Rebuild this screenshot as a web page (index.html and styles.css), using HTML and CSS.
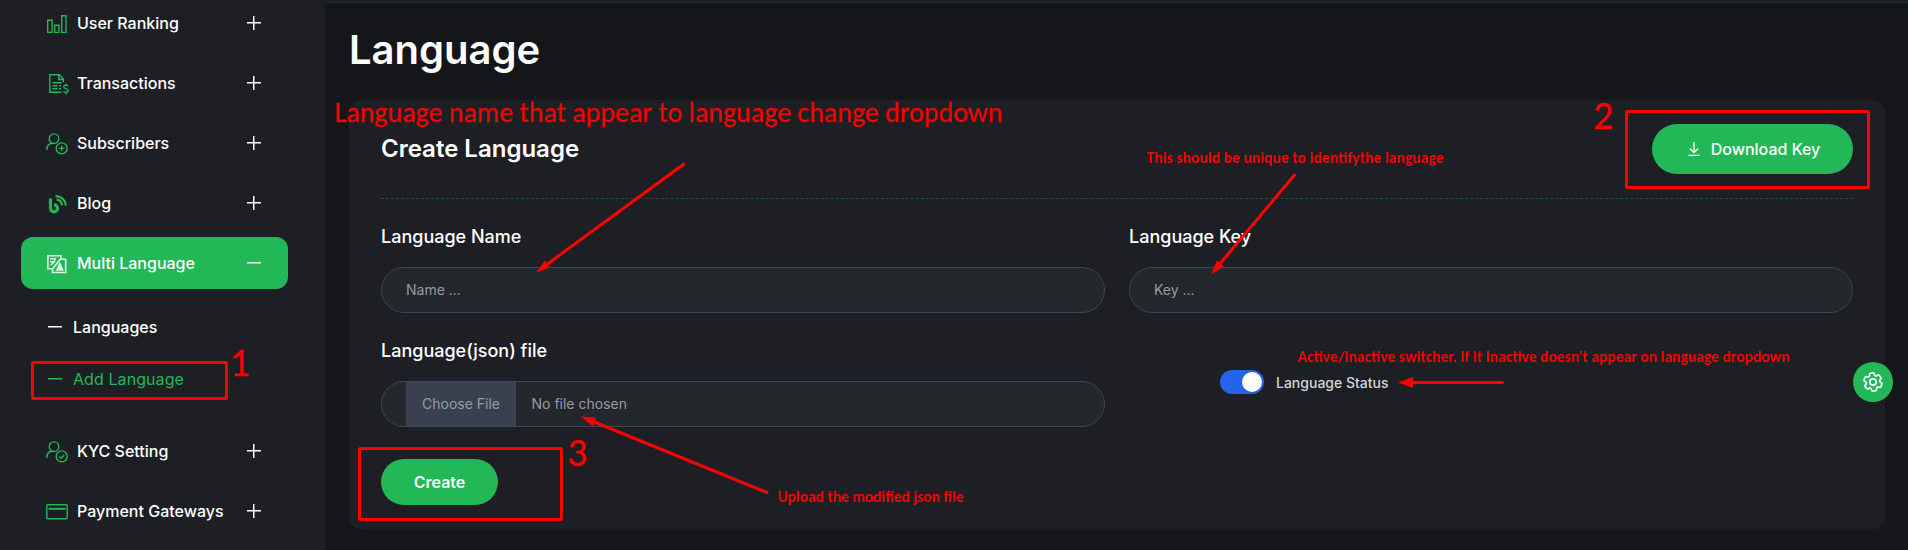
FILE: index.html
```html
<!DOCTYPE html>
<html lang="en">
<head>
<meta charset="utf-8">
<title>Language</title>
<link rel="stylesheet" href="styles.css">
</head>
<body>
<div class="app">
  <aside class="sidebar">
    <nav class="menu">
      <a class="item"><svg class="icon" viewBox="0 -2 22 22"><path d="M1.700 6.200h4.300v12.200h-4.300zM8.700 11.200h4.300v7.200h-4.300zM15.700 1.700h4.300v16.700h-4.300z"/></svg><span>User Ranking</span><i class="plus"></i></a>
      <a class="item"><svg class="icon" viewBox="0 -1.5 22 22"><path d="M15.500 18.800H3.800V1.300h9.500l4 4v3.500M12.800 1.500v4.500h4.500M6.500 9.200h9M6.500 12.300h5M6.500 15.300h5M13 12.300h2M13 15.300h2"/><path d="M22 12.700c-.6-1.200-4.300-1.500-4.300.7 0 2.200 4.500 1.400 4.500 3.700 0 2.300-4 2-4.700.4M20 10.300v1.500M20 18.800v2.200"/></svg><span>Transactions</span><i class="plus"></i></a>
      <a class="item"><svg class="icon" viewBox="0 -1 22 22"><circle cx="8" cy="5.700" r="4.800"/><path d="M.800 17c0-4 2.300-6.600 5.800-6.700"/><circle cx="15.700" cy="15.400" r="5.500"/><path d="M13 15.400h5.400M15.700 12.700v5.400"/></svg><span>Subscribers</span><i class="plus"></i></a>
      <a class="item"><svg class="icon" viewBox="0 -1.5 22 22"><path d="M4.500 5v9.800a3.500 3.500 0 1 0 3.500-3.500" stroke-width="3.200"/><path d="M10.500 6.200c3.500.2 5.200 2.300 5.500 5.600M9.500 2.600c6 .2 10 3.800 10.400 9.400" stroke-width="2.200"/></svg><span>Blog</span><i class="plus"></i></a>
      <a class="item active"><svg class="icon" viewBox="0 -2 22 22"><path d="M6 14.700H1.900V1.700h13v3.500h4.800v13.300H6.500v-4zM14.500 5L6.500 15" stroke-width="1.600"/><path d="M4 4.800h6M4 7.800h4.500M9 4.800c0 3-2 5-4.500 6"/><path d="M10.800 16l3-6.500 3 6.500z" class="solid"/></svg><span>Multi Language</span><i class="minus"></i></a>
      <div class="submenu">
        <a class="sub"><i class="minus"></i><span>Languages</span></a>
        <a class="sub current"><i class="minus"></i><span>Add Language</span></a>
      </div>
      <a class="item"><svg class="icon" viewBox="0 -1 22 22"><circle cx="8" cy="5.700" r="4.800"/><path d="M.800 17c0-4 2.300-6.600 5.800-6.700"/><circle cx="15.700" cy="15.400" r="5.500"/><path d="M13.200 15.400l1.900 1.800 3.200-3.300"/></svg><span>KYC Setting</span><i class="plus"></i></a>
      <a class="item"><svg class="icon" viewBox="0 0 22 22"><rect x=".8" y="4.800" width="20.400" height="14" rx="1"/><path d="M2.500 8.800h17" stroke-width="2"/></svg><span>Payment Gateways</span><i class="plus"></i></a>
    </nav>
  </aside>
  <main class="main">
    <h1 class="title">Language</h1>
    <section class="card">
      <header class="card-head">
        <h2 class="card-title">Create Language</h2>
        <button class="btn download"><svg class="arrow" viewBox="0 0 12 16"><path d="M6 1v10.500M1.800 7.500l4.200 4.200 4.200-4.200M.5 14.300h11"/></svg>Download Key</button>
      </header>
      <form class="form">
        <div class="field"><label class="label">Language Name</label><input class="input" placeholder="Name ..."></div>
        <div class="field"><label class="label">Language Key</label><input class="input" placeholder="Key ..."></div>
        <div class="field"><label class="label">Language(json) file</label><div class="input file"><span class="choose">Choose File</span><span class="chosen">No file chosen</span></div></div>
        <div class="status"><span class="switch"></span><span>Language Status</span></div>
      </form>
      <button class="btn create">Create</button>
    </section>
  </main>
</div>
<div class="settings"><svg viewBox="0 0 24 24"><path transform="rotate(-8 12 12)" d="M9.594 3.940c.09-.542.56-.94 1.110-.94h2.593c.55 0 1.020.398 1.110.94l.213 1.281c.063.374.313.686.645.87.074.04.147.083.22.127.325.196.72.257 1.075.124l1.217-.456a1.125 1.125 0 0 1 1.370.49l1.296 2.247a1.125 1.125 0 0 1-.26 1.431l-1.003.827c-.293.241-.438.613-.43.992a7.723 7.723 0 0 1 0 .255c-.008.378.137.75.43.991l1.004.827c.424.35.534.955.26 1.430l-1.298 2.247a1.125 1.125 0 0 1-1.369.491l-1.217-.456c-.355-.133-.75-.072-1.076.124a6.470 6.470 0 0 1-.22.128c-.331.183-.581.495-.644.869l-.213 1.281c-.09.543-.56.94-1.110.94h-2.594c-.55 0-1.019-.398-1.110-.94l-.213-1.281c-.062-.374-.312-.686-.644-.87a6.520 6.520 0 0 1-.22-.127c-.325-.196-.72-.257-1.076-.124l-1.217.456a1.125 1.125 0 0 1-1.369-.49l-1.297-2.247a1.125 1.125 0 0 1 .26-1.431l1.004-.827c.292-.24.437-.613.43-.991a6.932 6.932 0 0 1 0-.255c.007-.38-.138-.751-.43-.992l-1.004-.827a1.125 1.125 0 0 1-.26-1.430l1.297-2.247a1.125 1.125 0 0 1 1.370-.491l1.216.456c.356.133.751.072 1.076-.124.072-.044.146-.086.22-.128.332-.183.582-.495.644-.869z"/><circle cx="12" cy="12" r="3.200"/></svg></div>
<svg class="notes" viewBox="0 0 1908 550">
  <g class="frames">
    <rect x="32.500" y="362.500" width="194" height="36" rx="1"/>
    <rect x="1626.500" y="111.500" width="242" height="76" rx="1"/>
    <rect x="359.500" y="448.500" width="202" height="71" rx="1"/>
  </g>
  <g class="shafts">
    <path d="M684 164L546 265M1294.500 175L1218 266M767 492.500L592 421M1502.500 382.500H1411"/>
  </g>
  <g class="heads">
    <path d="M536 272.500l9-12 5 7zM1211 274.500l6-14 7 6zM581 416.500l15 1-3 9zM1398 382.500l15-5.500v11z"/>
  </g>
  <g class="big">
    <text x="335" y="122" textLength="668">Language name that appear to language change dropdown</text>
  </g>
  <g class="nums">
    <text x="230" y="376">1</text>
    <text x="1593.500" y="129">2</text>
    <text x="567.500" y="466">3</text>
  </g>
  <g class="small">
    <text x="1147" y="163" textLength="297">This should be unique to identifythe language</text>
    <text x="1298" y="362" textLength="492">Active/Inactive switcher. If it Inactive doesn't appear on language dropdown</text>
    <text x="778" y="502" textLength="186">Upload the modified json file</text>
  </g>
</svg>
</body>
</html>
```
FILE: styles.css
```css
* { box-sizing: border-box; }
body { margin: 0; height: 550px; overflow: hidden; background: #15161a; color: #fff; font-family: Inter, "Liberation Sans", sans-serif; }
.app { display: flex; height: 550px; }
.sidebar { width: 325px; flex: none; background: #1e1f24; overflow: hidden; }
.menu { display: flex; flex-direction: column; gap: 8px; padding: 0 37px 0 21px; margin-top: -3px; }
.item { display: flex; align-items: center; height: 52px; padding: 0 27px 0 25px; border-radius: 12px; font-size: 16px; font-weight: 500; }
.item span { flex: 1; margin-left: 9px; white-space: nowrap; }
.icon { width: 22px; height: 22px; fill: none; stroke: #22b858; stroke-width: 1.4; flex: none; overflow: visible; }
.active { background: #22b858; }
.active .icon { stroke: #e0f5e8; }
.solid { fill: #e0f5e8; }
.plus, .minus { width: 14px; height: 14px; flex: none; background: linear-gradient(currentColor, currentColor) center / 14px 1.500px no-repeat; }
.plus { background: linear-gradient(currentColor, currentColor) center / 14px 1.500px no-repeat, linear-gradient(currentColor, currentColor) center / 1.500px 14px no-repeat; }
.submenu { display: flex; flex-direction: column; height: 120px; padding: 4px 0 0 27px; }
.sub { display: flex; align-items: center; gap: 11px; height: 52px; font-size: 16px; font-weight: 500; }
.current { color: #22b858; font-weight: 400; letter-spacing: .08px; }
.main { flex: 1; padding: 21px 23px 0 24px; border-top: 1px solid #1e2a44; margin-top: 2px; box-shadow: 0 -2px #1e1f24; }
.title { margin: 0; height: 76px; font-size: 40px; line-height: 52px; font-weight: 600; }
.card { height: 429px; padding: 24px 32px; border-radius: 12px; background: #1e1f24; }
.card-head { display: flex; align-items: flex-start; justify-content: space-between; height: 75px; border-bottom: 1px dashed #1d5034; }
.card-title { margin: 9px 0 0; font-size: 24px; line-height: 32px; font-weight: 600; }
.btn { display: flex; align-items: center; justify-content: center; border: 0; border-radius: 25px; background: #22b858; color: #fff; font: 500 16px Inter, sans-serif; }
.download { width: 201px; height: 50px; padding: 0 0 0 3px; gap: 11px; }
.arrow { width: 12px; height: 16px; fill: none; stroke: #fff; stroke-width: 1.300; }
.create { width: 117px; height: 46px; margin-top: 32px; font-weight: 600; }
.form { display: grid; grid-template-columns: 1fr 1fr; gap: 24px; padding-top: 24px; }
.field { display: flex; flex-direction: column; gap: 16px; height: 90px; }
.label { font-size: 18px; line-height: 28px; font-weight: 500; }
.input { width: 100%; height: 46px; padding: 0 24px 2px; border: 1px solid #3b455b; border-radius: 23px; background: #24272b; color: #949ba6; font: 400 14px Inter, sans-serif; outline: 0; }
.input::placeholder { color: #949ba6; opacity: 1; }
.file { display: flex; padding-bottom: 0; }
.choose { width: 110px; display: grid; place-items: center; padding-bottom: 2px; background: #394150; }
.chosen { display: flex; align-items: center; margin-left: 15.500px; padding-bottom: 2px; }
.status { display: flex; align-items: center; gap: 12px; height: 24px; margin: 33px 0 0 91px; font-size: 14px; font-weight: 500; color: #d1d5db; }
.switch { display: flex; justify-content: flex-end; width: 44px; height: 24px; padding: 2px; border-radius: 12px; background: #2563eb; }
.switch::after { content: ""; width: 20px; height: 20px; border-radius: 50%; background: #fff; }
.settings { position: fixed; left: 1853px; top: 362px; width: 40px; height: 40px; display: grid; place-items: center; border-radius: 50%; background: #22b858; }
.settings svg { width: 24px; height: 24px; fill: none; stroke: #fff; stroke-width: 1.700; stroke-linejoin: round; }
.notes { position: absolute; left: 0; top: 0; width: 1908px; height: 550px; pointer-events: none; }
.frames { fill: none; stroke: #f00; stroke-width: 3; }
.shafts { fill: none; stroke: #f00; stroke-width: 3; stroke-linecap: round; }
.heads, .big, .nums, .small { fill: #f00; }
.big, .nums { stroke: #f00; stroke-width: .3; }
.big { font: 400 28px Carlito, Lato, sans-serif; }
.nums { font: 400 40px Carlito, Lato, sans-serif; }
.small { font: 700 15.500px Carlito, Lato, sans-serif; }
```
